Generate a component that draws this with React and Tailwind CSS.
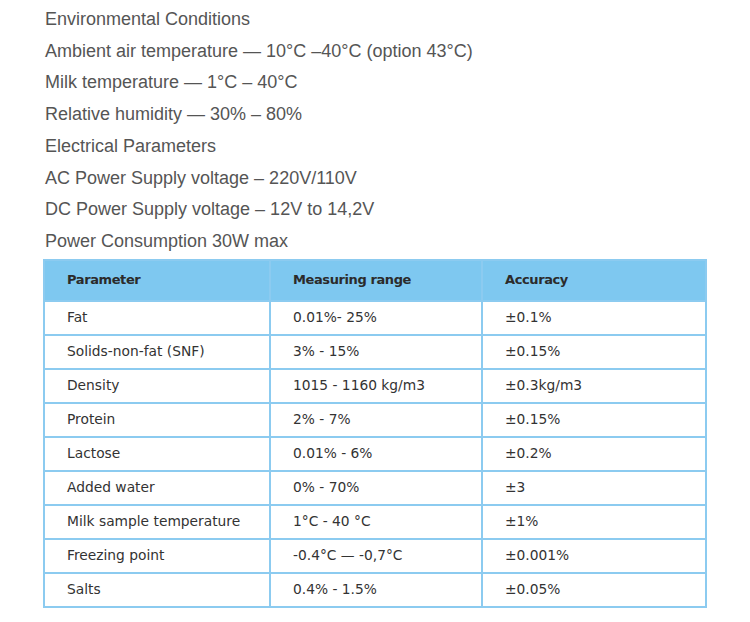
import React from 'react';

const lines = [
  'Environmental Conditions',
  'Ambient air temperature — 10°C –40°C (option 43°C)',
  'Milk temperature — 1°C – 40°C',
  'Relative humidity — 30% – 80%',
  'Electrical Parameters',
  'AC Power Supply voltage – 220V/110V',
  'DC Power Supply voltage – 12V to 14,2V',
  'Power Consumption 30W max',
];

const rows = [
  ['Fat', '0.01%- 25%', '±0.1%'],
  ['Solids-non-fat (SNF)', '3% - 15%', '±0.15%'],
  ['Density', '1015 - 1160 kg/m3', '±0.3kg/m3'],
  ['Protein', '2% - 7%', '±0.15%'],
  ['Lactose', '0.01% - 6%', '±0.2%'],
  ['Added water', '0% - 70%', '±3'],
  ['Milk sample temperature', '1°C - 40 °C', '±1%'],
  ['Freezing point', '-0.4°C — -0,7°C', '±0.001%'],
  ['Salts', '0.4% - 1.5%', '±0.05%'],
];

const App = () => {
  return (
    <div className="w-[750px] h-[622px] bg-white pl-[45px] pt-[4px]">
      {/* Spec lines */}
      <div className="font-['Liberation_Sans',Arial,sans-serif] text-[18px] leading-[31.7px] text-[#555]">
        {lines.map((l) => (
          <p key={l}>{l}</p>
        ))}
      </div>

      {/* Parameters table */}
      <table className="-ml-[2px] mt-[1px] w-[664px] border-collapse border-2 border-[#8ccbf0] font-['DejaVu_Sans',Verdana,sans-serif] text-[13.8px] text-[#333]">
        <thead>
          <tr className="h-[41px] bg-[#7ec8f0] text-left text-[13px] tracking-[-0.4px] text-[#2b2b2b]">
            <th className="w-[226px] border-2 border-[#8ccbf0] pl-[22px] font-bold">Parameter</th>
            <th className="w-[212px] border-2 border-[#8ccbf0] pl-[22px] font-bold">Measuring range</th>
            <th className="border-2 border-[#8ccbf0] pl-[22px] font-bold">Accuracy</th>
          </tr>
        </thead>
        <tbody>
          {rows.map(([a, b, c]) => (
            <tr key={a} className="h-[34px]">
              <td className="border-2 border-[#8ccbf0] pl-[22px]">{a}</td>
              <td className="border-2 border-[#8ccbf0] pl-[22px]">{b}</td>
              <td className="border-2 border-[#8ccbf0] pl-[22px]">{c}</td>
            </tr>
          ))}
        </tbody>
      </table>
    </div>
  );
};

export default App;
